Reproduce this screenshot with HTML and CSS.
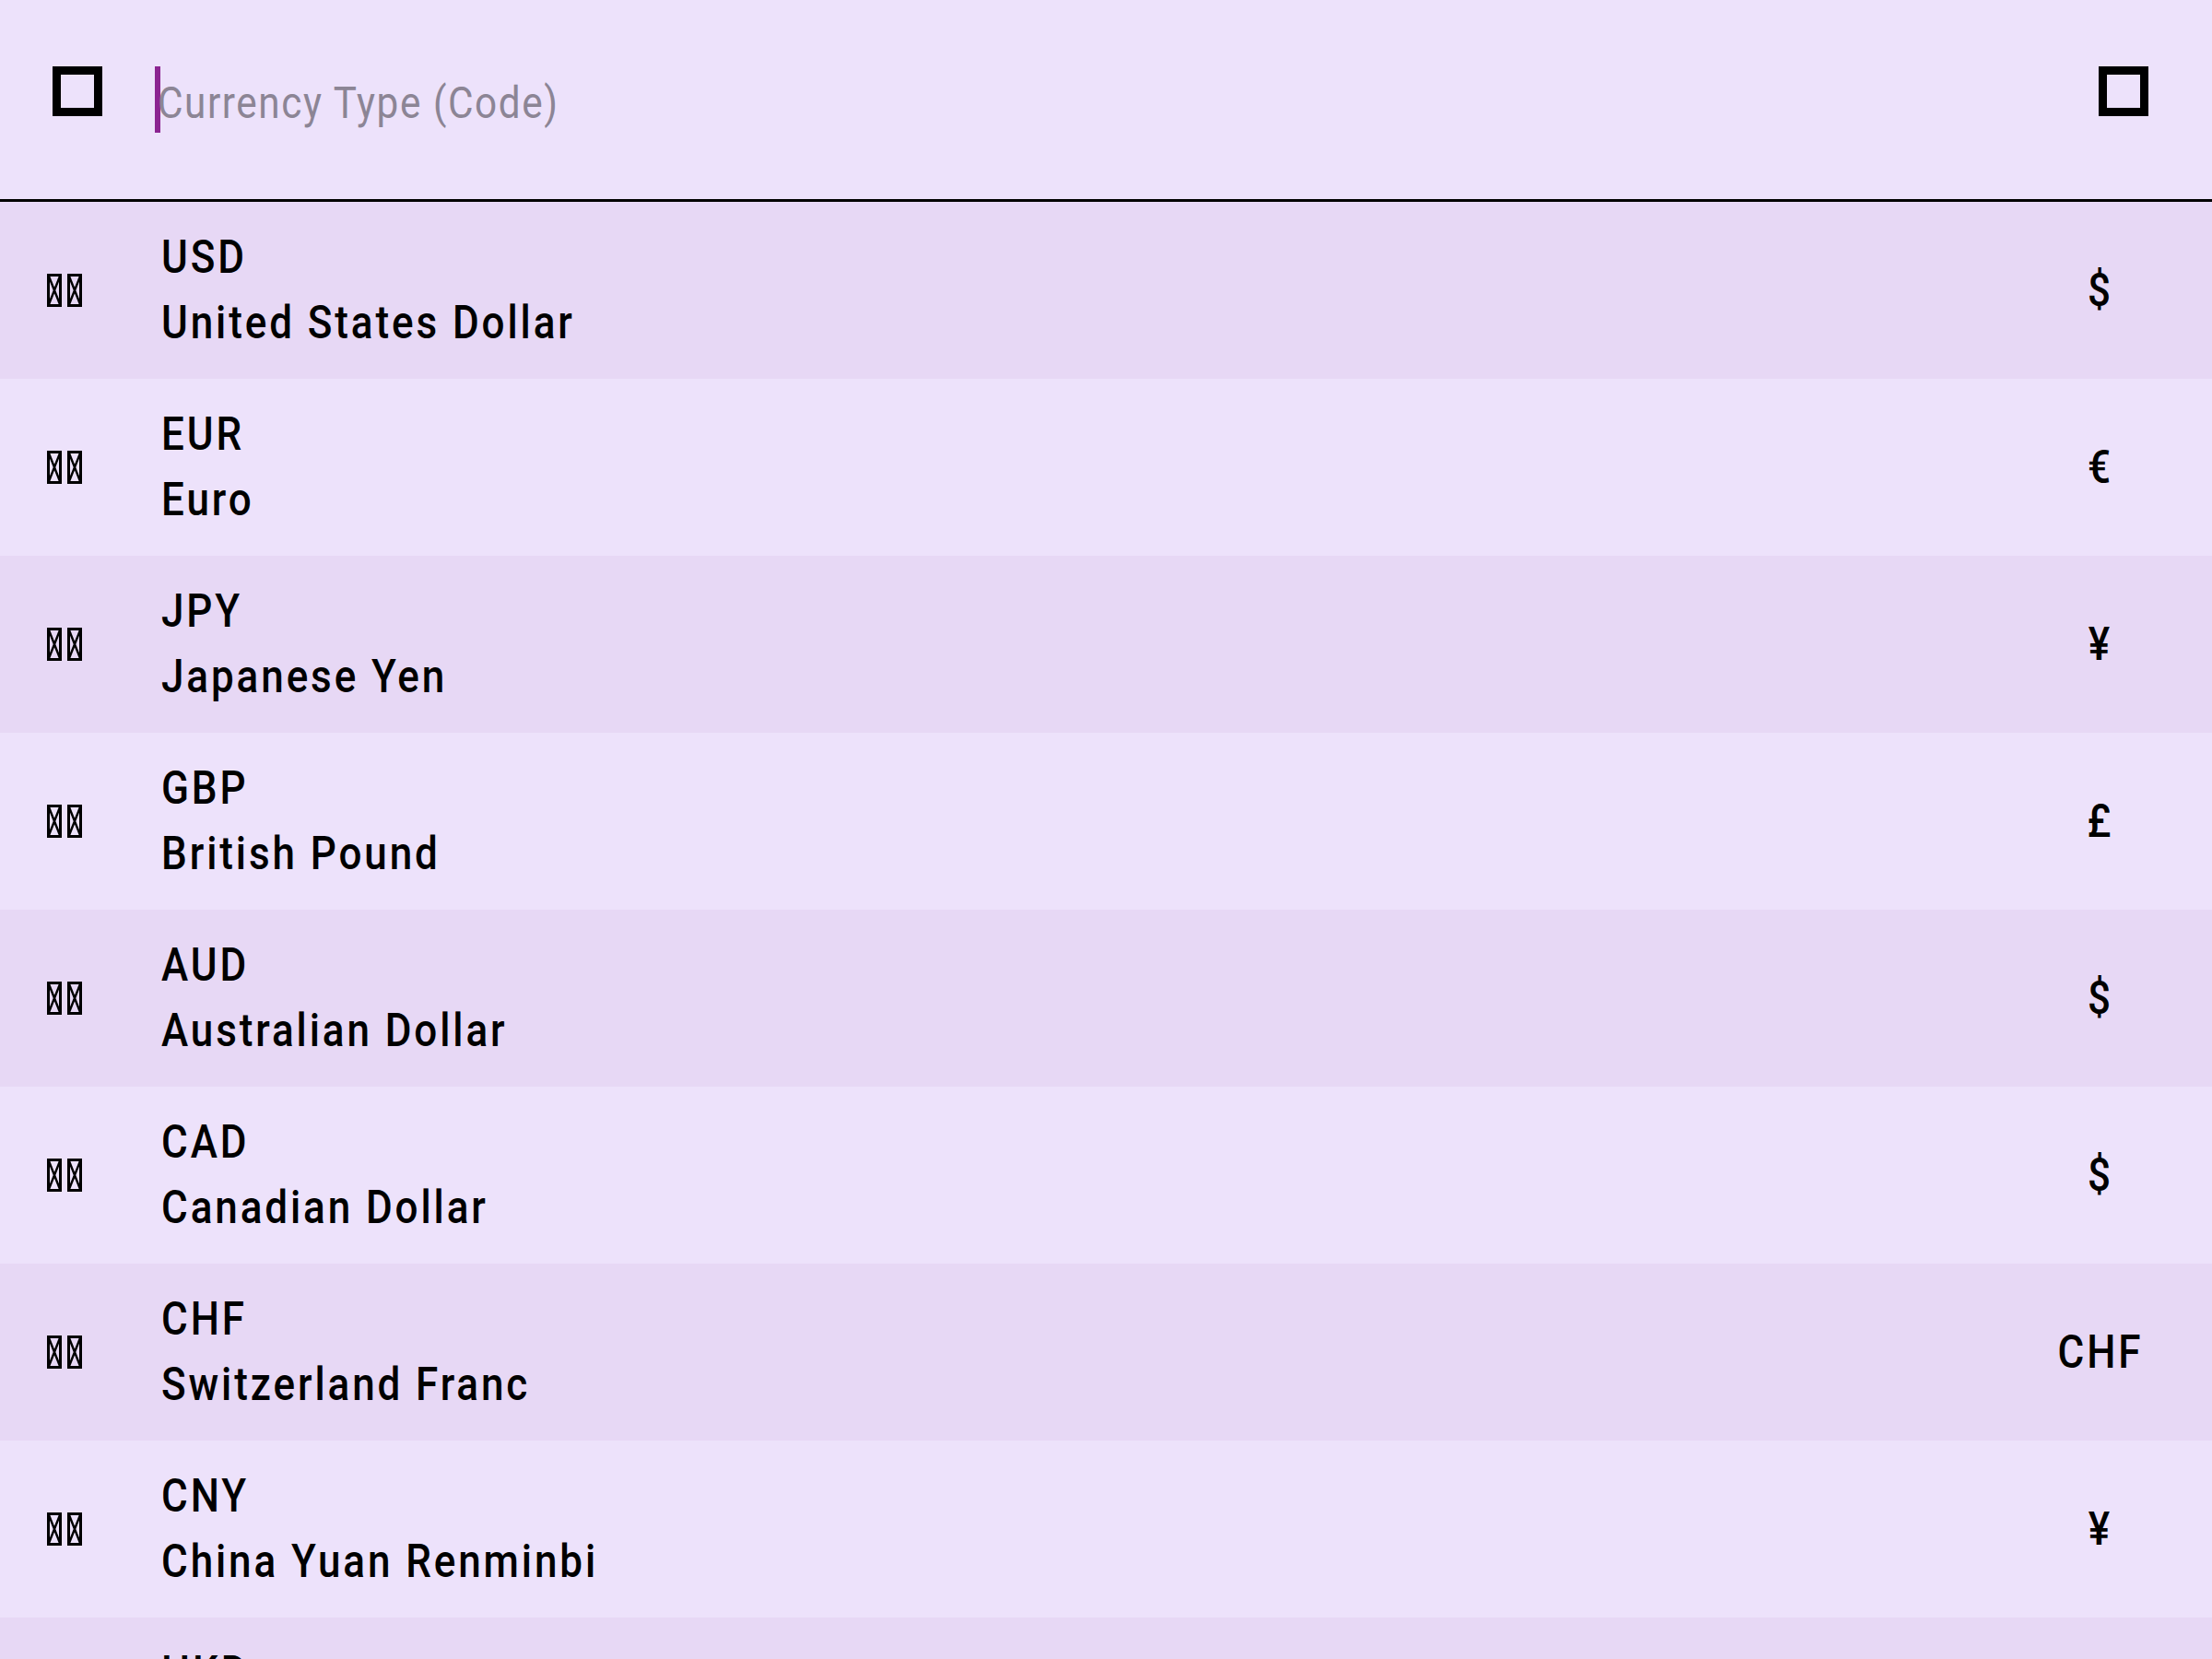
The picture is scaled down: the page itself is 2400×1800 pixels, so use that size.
FILE: index.html
```html
<!DOCTYPE html>
<html lang="en">
<head>
<meta charset="utf-8">
<title>Currency Type</title>
<link rel="stylesheet" href="styles.css">
</head>
<body>
<div class="app">
  <header class="search-bar">
    <span class="tofu-icon"></span>
    <div class="field">
      <span class="caret"></span>
      <span class="placeholder">Currency Type (Code)</span>
    </div>
    <span class="tofu-icon"></span>
  </header>
  <ul class="list">
    <li class="row">
      <span class="flag"><svg viewBox="0 0 16 36"><g fill="none" stroke="#000" stroke-width="3"><rect x="1.5" y="1.5" width="13" height="33"/><path d="M1.5 1.5L14.5 34.5M14.5 1.5L1.5 34.5" stroke-width="2.4"/></g></svg><svg viewBox="0 0 16 36"><g fill="none" stroke="#000" stroke-width="3"><rect x="1.5" y="1.5" width="13" height="33"/><path d="M1.5 1.5L14.5 34.5M14.5 1.5L1.5 34.5" stroke-width="2.4"/></g></svg></span>
      <div class="info"><span class="code">USD</span><span class="name">United States Dollar</span></div>
      <span class="symbol">$</span>
    </li>
    <li class="row">
      <span class="flag"><svg viewBox="0 0 16 36"><g fill="none" stroke="#000" stroke-width="3"><rect x="1.5" y="1.5" width="13" height="33"/><path d="M1.5 1.5L14.5 34.5M14.5 1.5L1.5 34.5" stroke-width="2.4"/></g></svg><svg viewBox="0 0 16 36"><g fill="none" stroke="#000" stroke-width="3"><rect x="1.5" y="1.5" width="13" height="33"/><path d="M1.5 1.5L14.5 34.5M14.5 1.5L1.5 34.5" stroke-width="2.4"/></g></svg></span>
      <div class="info"><span class="code">EUR</span><span class="name">Euro</span></div>
      <span class="symbol">€</span>
    </li>
    <li class="row">
      <span class="flag"><svg viewBox="0 0 16 36"><g fill="none" stroke="#000" stroke-width="3"><rect x="1.5" y="1.5" width="13" height="33"/><path d="M1.5 1.5L14.5 34.5M14.5 1.5L1.5 34.5" stroke-width="2.4"/></g></svg><svg viewBox="0 0 16 36"><g fill="none" stroke="#000" stroke-width="3"><rect x="1.5" y="1.5" width="13" height="33"/><path d="M1.5 1.5L14.5 34.5M14.5 1.5L1.5 34.5" stroke-width="2.4"/></g></svg></span>
      <div class="info"><span class="code">JPY</span><span class="name">Japanese Yen</span></div>
      <span class="symbol">¥</span>
    </li>
    <li class="row">
      <span class="flag"><svg viewBox="0 0 16 36"><g fill="none" stroke="#000" stroke-width="3"><rect x="1.5" y="1.5" width="13" height="33"/><path d="M1.5 1.5L14.5 34.5M14.5 1.5L1.5 34.5" stroke-width="2.4"/></g></svg><svg viewBox="0 0 16 36"><g fill="none" stroke="#000" stroke-width="3"><rect x="1.5" y="1.5" width="13" height="33"/><path d="M1.5 1.5L14.5 34.5M14.5 1.5L1.5 34.5" stroke-width="2.4"/></g></svg></span>
      <div class="info"><span class="code">GBP</span><span class="name">British Pound</span></div>
      <span class="symbol">£</span>
    </li>
    <li class="row">
      <span class="flag"><svg viewBox="0 0 16 36"><g fill="none" stroke="#000" stroke-width="3"><rect x="1.5" y="1.5" width="13" height="33"/><path d="M1.5 1.5L14.5 34.5M14.5 1.5L1.5 34.5" stroke-width="2.4"/></g></svg><svg viewBox="0 0 16 36"><g fill="none" stroke="#000" stroke-width="3"><rect x="1.5" y="1.5" width="13" height="33"/><path d="M1.5 1.5L14.5 34.5M14.5 1.5L1.5 34.5" stroke-width="2.4"/></g></svg></span>
      <div class="info"><span class="code">AUD</span><span class="name">Australian Dollar</span></div>
      <span class="symbol">$</span>
    </li>
    <li class="row">
      <span class="flag"><svg viewBox="0 0 16 36"><g fill="none" stroke="#000" stroke-width="3"><rect x="1.5" y="1.5" width="13" height="33"/><path d="M1.5 1.5L14.5 34.5M14.5 1.5L1.5 34.5" stroke-width="2.4"/></g></svg><svg viewBox="0 0 16 36"><g fill="none" stroke="#000" stroke-width="3"><rect x="1.5" y="1.5" width="13" height="33"/><path d="M1.5 1.5L14.5 34.5M14.5 1.5L1.5 34.5" stroke-width="2.4"/></g></svg></span>
      <div class="info"><span class="code">CAD</span><span class="name">Canadian Dollar</span></div>
      <span class="symbol">$</span>
    </li>
    <li class="row">
      <span class="flag"><svg viewBox="0 0 16 36"><g fill="none" stroke="#000" stroke-width="3"><rect x="1.5" y="1.5" width="13" height="33"/><path d="M1.5 1.5L14.5 34.5M14.5 1.5L1.5 34.5" stroke-width="2.4"/></g></svg><svg viewBox="0 0 16 36"><g fill="none" stroke="#000" stroke-width="3"><rect x="1.5" y="1.5" width="13" height="33"/><path d="M1.5 1.5L14.5 34.5M14.5 1.5L1.5 34.5" stroke-width="2.4"/></g></svg></span>
      <div class="info"><span class="code">CHF</span><span class="name">Switzerland Franc</span></div>
      <span class="symbol">CHF</span>
    </li>
    <li class="row">
      <span class="flag"><svg viewBox="0 0 16 36"><g fill="none" stroke="#000" stroke-width="3"><rect x="1.5" y="1.5" width="13" height="33"/><path d="M1.5 1.5L14.5 34.5M14.5 1.5L1.5 34.5" stroke-width="2.4"/></g></svg><svg viewBox="0 0 16 36"><g fill="none" stroke="#000" stroke-width="3"><rect x="1.5" y="1.5" width="13" height="33"/><path d="M1.5 1.5L14.5 34.5M14.5 1.5L1.5 34.5" stroke-width="2.4"/></g></svg></span>
      <div class="info"><span class="code">CNY</span><span class="name">China Yuan Renminbi</span></div>
      <span class="symbol">¥</span>
    </li>
    <li class="row">
      <span class="flag"><svg viewBox="0 0 16 36"><g fill="none" stroke="#000" stroke-width="3"><rect x="1.5" y="1.5" width="13" height="33"/><path d="M1.5 1.5L14.5 34.5M14.5 1.5L1.5 34.5" stroke-width="2.4"/></g></svg><svg viewBox="0 0 16 36"><g fill="none" stroke="#000" stroke-width="3"><rect x="1.5" y="1.5" width="13" height="33"/><path d="M1.5 1.5L14.5 34.5M14.5 1.5L1.5 34.5" stroke-width="2.4"/></g></svg></span>
      <div class="info"><span class="code">HKD</span><span class="name">Hong Kong Dollar</span></div>
      <span class="symbol">$</span>
    </li>
  </ul>
</div>
</body>
</html>
```
FILE: styles.css
```css
html, body {
  margin: 0;
  padding: 0;
  background: #ede2fb;
}

body {
  font-family: Roboto, "Noto Sans", sans-serif;
  width: 2400px;
  height: 1800px;
  overflow: hidden;
}

.app {
  display: flex;
  flex-direction: column;
}

.search-bar {
  box-sizing: border-box;
  border-bottom: 3px solid #000;
  height: 219px;
  display: flex;
  align-items: flex-start;
  padding: 72px 69px 0 57px;
  gap: 57px;
  background: #ede2fb;
}

.tofu-icon {
  width: 54px;
  height: 54px;
  box-sizing: border-box;
  border: 9px solid #000;
  flex: none;
}

.field {
  flex: 1;
  display: flex;
  align-items: flex-start;
  height: 72px;
}

.caret {
  width: 6px;
  height: 72px;
  background: #8b2491;
  flex: none;
}

.placeholder {
  display: block;
  font-size: 48px;
  font-weight: 400;
  color: #8c8595;
  line-height: 72px;
  padding-top: 4px;
  margin-left: -3px;
  letter-spacing: 1.8px;
  transform: scaleX(0.88);
  transform-origin: left center;
  white-space: nowrap;
}

.list {
  list-style: none;
  margin: 0;
  padding: 0;
}

.row {
  height: 192px;
  display: flex;
  align-items: center;
  padding: 0 41px 0 51px;
  background: #e7d8f5;
}

.row:nth-child(even) {
  background: #ede2fb;
}

.flag {
  display: flex;
  gap: 6px;
  width: 38px;
  margin-right: 86px;
  flex: none;
}

.flag svg {
  width: 16px;
  height: 36px;
  display: block;
}

.info {
  flex: 1;
  display: flex;
  flex-direction: column;
  align-items: flex-start;
}

.code, .name {
  font-size: 50px;
  font-weight: 500;
  line-height: 71px;
  letter-spacing: 3.3px;
  color: #000;
  transform: scaleX(0.88);
  transform-origin: left center;
  white-space: nowrap;
}

.symbol {
  width: 160px;
  text-align: center;
  font-size: 50px;
  font-weight: 500;
  letter-spacing: 3.3px;
  color: #000;
  flex: none;
  transform: scaleX(0.88);
  transform-origin: center;
}
```
